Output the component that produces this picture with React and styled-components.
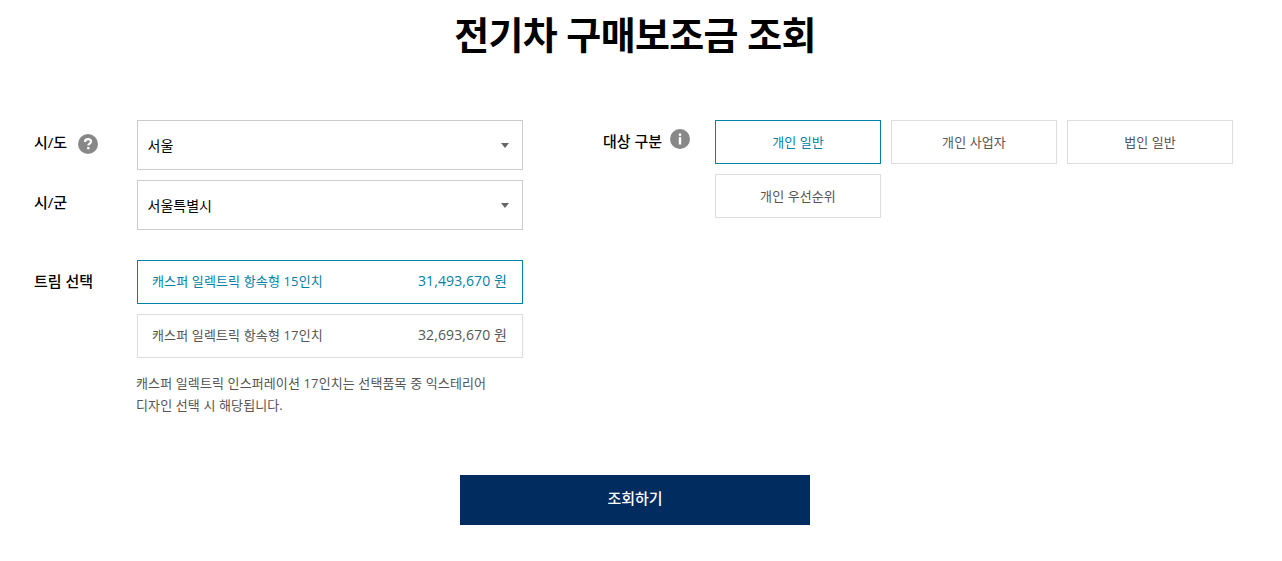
import React from 'react';
import styled, { createGlobalStyle } from 'styled-components';

const GlobalStyle = createGlobalStyle`
    html, body {
        margin: 0;
        padding: 0;
        background: #fff;
    }
    body {
        font-family: "Open Sans", "Noto Sans CJK KR", sans-serif;
        color: #000;
    }
`;

const Page = styled.div`
    width: 1270px;
    height: 561px;
    overflow: hidden;
`;

const Title = styled.h1`
    margin: 0;
    height: 120px;
    padding-top: 7px;
    box-sizing: border-box;
    text-align: center;
    font-size: 38px;
    line-height: 54px;
    font-weight: 700;
    letter-spacing: -0.65px;
`;

const Columns = styled.div`
    display: flex;
    height: 355px;
`;

const LeftColumn = styled.div`
    width: 523px;
    padding-left: 34px;
    box-sizing: border-box;
`;

const RightColumn = styled.div`
    display: flex;
    margin-left: 80px;
`;

const Row = styled.div`
    display: flex;
    margin-bottom: ${p => p.$gap || 10}px;
`;

const Label = styled.div`
    display: flex;
    align-items: flex-start;
    width: ${p => p.$width || 103}px;
    flex-shrink: 0;
    font-size: 15px;
    line-height: 22px;
    font-weight: 500;
    padding-top: ${p => p.$top ?? 11}px;
    box-sizing: border-box;
`;

const HintIcon = styled.svg`
    width: 20px;
    height: 20px;
    margin-left: ${p => p.$left || 9}px;
    margin-top: ${p => p.$top || 0}px;
`;

const SelectBox = styled.div`
    display: flex;
    align-items: center;
    justify-content: space-between;
    width: 386px;
    height: 50px;
    box-sizing: border-box;
    border: 1px solid #ccc;
    padding: 0 13px 0 9.5px;
    font-size: 14px;
`;

const Caret = styled.span`
    width: 0;
    height: 0;
    border-left: 4px solid transparent;
    border-right: 4px solid transparent;
    border-top: 5px solid #666;
`;

const TrimList = styled.div`
    display: flex;
    flex-direction: column;
    gap: 10px;
    width: 386px;
`;

const TrimOption = styled.div`
    display: flex;
    align-items: center;
    justify-content: space-between;
    height: 44px;
    box-sizing: border-box;
    padding: 0 15px 4px 14px;
    border: 1px solid ${p => (p.$active ? '#0081a8' : '#ddd')};
    color: ${p => (p.$active ? '#0081a8' : '#555')};
    font-size: 13px;
    letter-spacing: 0.14px;
`;

const Price = styled.span`
    font-size: 14px;
    letter-spacing: 0.1px;
`;

const Note = styled.p`
    margin: 14px 0 0 -1px;
    font-size: 13px;
    line-height: 22px;
    letter-spacing: 0.12px;
    color: #555;
`;

const TargetGrid = styled.div`
    display: grid;
    grid-template-columns: repeat(3, 166px);
    grid-auto-rows: 44px;
    gap: 10px;
`;

const TargetButton = styled.div`
    display: flex;
    align-items: center;
    justify-content: center;
    box-sizing: border-box;
    padding: 0 0 2px 0;
    border: 1px solid ${p => (p.$active ? '#0081a8' : '#ddd')};
    color: ${p => (p.$active ? '#0081a8' : '#555')};
    font-size: 13px;
    letter-spacing: 0.1px;
`;

const Footer = styled.div`
    display: flex;
    justify-content: center;
`;

const SubmitButton = styled.button`
    width: 350px;
    height: 50px;
    padding: 0 0 5px;
    border: 0;
    background: #002c5f;
    color: #fff;
    font-family: inherit;
    font-size: 15px;
    font-weight: 500;
`;

const trims = [
    { name: '캐스퍼 일렉트릭 항속형 15인치', price: '31,493,670 원', active: true },
    { name: '캐스퍼 일렉트릭 항속형 17인치', price: '32,693,670 원' },
];

const targets = [
    { name: '개인 일반', active: true },
    { name: '개인 사업자' },
    { name: '법인 일반' },
    { name: '개인 우선순위' },
];

function QuestionIcon() {
    return (
        <HintIcon viewBox="0 0 20 20" $left={11} $top={3}>
            <circle cx="10" cy="10" r="10" fill="#888" />
            <path d="M7 8c0-1.800 1.200-2.900 3-2.900 1.800 0 3 1 3 2.400 0 1.200-.7 1.800-1.600 2.400-.7.450-1 .8-1 1.600" fill="none" stroke="#fff" strokeWidth="2.200" />
            <rect x="9.200" y="13" width="2.300" height="2.300" fill="#fff" />
        </HintIcon>
    );
}

function InfoIcon() {
    return (
        <HintIcon viewBox="0 0 20 20" $left={8} $top={-1}>
            <circle cx="10" cy="10" r="10" fill="#888" />
            <rect x="8.800" y="4.500" width="2.400" height="2.400" fill="#fff" />
            <rect x="8.800" y="8" width="2.400" height="7.500" fill="#fff" />
        </HintIcon>
    );
}

function App() {
    return (
        <Page>
            <GlobalStyle />
            <Title>전기차 구매보조금 조회</Title>
            <Columns>
                <LeftColumn>
                    <Row>
                        <Label>시/도<QuestionIcon /></Label>
                        <SelectBox>서울<Caret /></SelectBox>
                    </Row>
                    <Row $gap={30}>
                        <Label>시/군</Label>
                        <SelectBox>서울특별시<Caret /></SelectBox>
                    </Row>
                    <Row>
                        <Label $top={10}>트림 선택</Label>
                        <div>
                            <TrimList>
                                {trims.map(trim => (
                                    <TrimOption key={trim.name} $active={trim.active}>
                                        <span>{trim.name}</span>
                                        <Price>{trim.price}</Price>
                                    </TrimOption>
                                ))}
                            </TrimList>
                            <Note>캐스퍼 일렉트릭 인스퍼레이션 17인치는 선택품목 중 익스테리어<br />디자인 선택 시 해당됩니다.</Note>
                        </div>
                    </Row>
                </LeftColumn>
                <RightColumn>
                    <Label $width={112} $top={10}>대상 구분<InfoIcon /></Label>
                    <TargetGrid>
                        {targets.map(target => (
                            <TargetButton key={target.name} $active={target.active}>{target.name}</TargetButton>
                        ))}
                    </TargetGrid>
                </RightColumn>
            </Columns>
            <Footer>
                <SubmitButton>조회하기</SubmitButton>
            </Footer>
        </Page>
    );
}

export default App;
